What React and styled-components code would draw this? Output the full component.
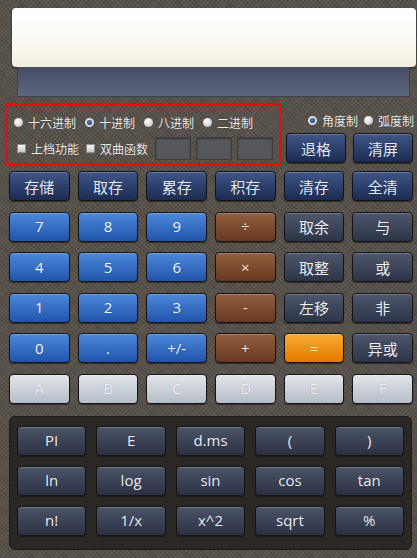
import React from 'react';
import styled, { createGlobalStyle, css } from 'styled-components';

const GlobalStyle = createGlobalStyle`
  html, body {
    margin: 0;
    padding: 0;
    background: #56504a;
  }
  body {
    font-family: "Open Sans", "Noto Sans CJK SC", sans-serif;
  }
`;

const Page = styled.div`
  width: 417px;
  height: 558px;
  overflow: hidden;
  padding-top: 8px;
  box-sizing: border-box;
  background-color: #58524b;
  background-image:
    repeating-linear-gradient(45deg, rgba(0, 0, 0, 0.14) 0 1px, transparent 1px 3px),
    repeating-linear-gradient(-45deg, rgba(255, 255, 255, 0.06) 0 1px, transparent 1px 3px);
  white-space: nowrap;
`;

const Display = styled.div`
  height: 59px;
  margin: 0 1px 0 12px;
  border-radius: 4px;
  background: linear-gradient(180deg, #ffffff 0%, #fbf9f1 60%, #f2eee0 100%);
  box-shadow: 0 1px 2px rgba(0, 0, 0, 0.7);
`;

const SubBar = styled.div`
  height: 30px;
  margin: 0 7px 0 17px;
  background: linear-gradient(180deg, #454d63 0%, #535c74 60%, #5e6780 100%);
  border: 1px solid #3a4050;
  border-top: none;
  box-sizing: border-box;
`;

const Controls = styled.div`
  display: flex;
  margin-top: 6px;
`;

const RedBox = styled.div`
  width: 277px;
  height: 63px;
  margin-left: 5px;
  box-sizing: border-box;
  border: 3px solid #e01010;
  padding: 7px 0 0 6px;
`;

const OptionRow = styled.div`
  display: flex;
  align-items: center;
  gap: ${p => p.$gap || 9}px;
  height: ${p => p.$h || 18}px;
`;

const Option = styled.label`
  display: flex;
  align-items: center;
  gap: 5px;
  font-family: "Noto Sans CJK SC", sans-serif;
  font-size: 12px;
  color: #ececec;
  text-shadow: 0 0 1px rgba(0, 0, 0, 0.5);
`;

const Radio = styled.span`
  width: 9px;
  height: 9px;
  border-radius: 50%;
  box-sizing: border-box;
  background: radial-gradient(circle at 40% 35%, #ffffff 0%, #d4d4d4 60%, #9a9a9a 100%);
  ${p => p.$on && css`
    border: 2px solid #d8dde4;
    background: radial-gradient(circle at 45% 40%, #5a8ac0 0%, #1d3f70 70%, #102040 100%);
  `}
`;

const Check = styled.span`
  width: 9px;
  height: 9px;
  box-sizing: border-box;
  border: 1px solid #8d8d8d;
  background: linear-gradient(180deg, #f4f4f4, #c8c8c8);
`;

const CheckRow = styled.div`
  display: flex;
  align-items: center;
  margin-top: 6px;
  padding-left: 3px;
`;

const Slot = styled.div`
  width: 36px;
  height: 23px;
  box-sizing: border-box;
  background: #57585c;
  border: 1px solid #3d3d40;
  box-shadow: inset 0 1px 2px rgba(0, 0, 0, 0.4);
`;

const Slots = styled.div`
  display: flex;
  gap: 5px;
  margin-left: 7px;
`;

const RightSide = styled.div`
  flex: 1;
  padding: 10px 0 0 4px;
`;

const RightButtons = styled.div`
  display: grid;
  grid-template-columns: 60px 60px;
  gap: 7px;
  margin-top: 6px;
  height: 30px;
`;

const palettes = {
  navy: { top: '#3f5688', bottom: '#1c2b52', text: '#e4ebf5' },
  blue: { top: '#4c89da', bottom: '#2154ab', text: '#f4f8ff' },
  brown: { top: '#93603f', bottom: '#673820', text: '#f3e8e0' },
  slate: { top: '#4e576d', bottom: '#2d3447', text: '#eef0f4' },
  orange: { top: '#fbac32', bottom: '#e27800', text: '#ffe8a0' },
  hex: { top: '#e2e6eb', bottom: '#b5bdc6', text: '#f2f4f6' },
  fn: { top: '#4c5468', bottom: '#2b3143', text: '#eceef2' },
};

const Key = styled.button`
  height: 30px;
  padding: 0;
  border-radius: 4px;
  border: 1px solid #121419;
  background: linear-gradient(180deg, ${p => palettes[p.$kind].top} 0%, ${p => palettes[p.$kind].bottom} 100%);
  color: ${p => palettes[p.$kind].text};
  box-shadow: inset 0 1px 0 rgba(255, 255, 255, 0.22), 0 1px 1px rgba(0, 0, 0, 0.45);
  text-shadow: 0 0 1px rgba(0, 0, 0, 0.35);
  font-family: "Open Sans", "Noto Sans CJK SC", sans-serif;
  font-size: 15px;
  line-height: 1;
  cursor: pointer;
  ${p => p.$cjk && css`font-family: "Noto Sans CJK SC", sans-serif;`}
`;

const Keypad = styled.div`
  display: grid;
  grid-template-columns: repeat(6, 1fr);
  grid-auto-rows: 30px;
  column-gap: 8px;
  row-gap: 10.5px;
  padding: 0 4px 0 9px;
  margin-top: 5px;
`;

const FnPanel = styled.div`
  margin: 12px 5px 0 9px;
  padding: 9px 7px 13px 7px;
  border-radius: 6px;
  background: #2a2724;
  border: 1px solid #1d1b19;
  display: grid;
  grid-template-columns: repeat(5, 1fr);
  grid-auto-rows: 30px;
  column-gap: 10px;
  row-gap: 10px;
`;

const radios = [
  { label: '十六进制' },
  { label: '十进制', on: true },
  { label: '八进制' },
  { label: '二进制' },
];

const keypad = [
  ['存储', 'navy', true], ['取存', 'navy', true], ['累存', 'navy', true], ['积存', 'navy', true], ['清存', 'navy', true], ['全清', 'navy', true],
  ['7', 'blue'], ['8', 'blue'], ['9', 'blue'], ['÷', 'brown'], ['取余', 'slate', true], ['与', 'slate', true],
  ['4', 'blue'], ['5', 'blue'], ['6', 'blue'], ['×', 'brown'], ['取整', 'slate', true], ['或', 'slate', true],
  ['1', 'blue'], ['2', 'blue'], ['3', 'blue'], ['-', 'brown'], ['左移', 'slate', true], ['非', 'slate', true],
  ['0', 'blue'], ['.', 'blue'], ['+/-', 'blue'], ['+', 'brown'], ['=', 'orange'], ['异或', 'slate', true],
  ['A', 'hex'], ['B', 'hex'], ['C', 'hex'], ['D', 'hex'], ['E', 'hex'], ['F', 'hex'],
];

const functions = ['PI', 'E', 'd.ms', '(', ')', 'ln', 'log', 'sin', 'cos', 'tan', 'n!', '1/x', 'x^2', 'sqrt', '%'];

export default function App() {
  return (
    <Page>
      <GlobalStyle />
      <Display />
      <SubBar />

      <Controls>
        <RedBox>
          <OptionRow>
            {radios.map(r => (
              <Option key={r.label}>
                <Radio $on={r.on} />
                {r.label}
              </Option>
            ))}
          </OptionRow>
          <CheckRow>
            <Option>
              <Check />
              上档功能
            </Option>
            <Option style={{ marginLeft: 7 }}>
              <Check />
              双曲函数
            </Option>
            <Slots>
              <Slot />
              <Slot />
              <Slot />
            </Slots>
          </CheckRow>
        </RedBox>

        <RightSide>
          <OptionRow $gap={6} $h={14} style={{ paddingLeft: 22 }}>
            <Option>
              <Radio $on />
              角度制
            </Option>
            <Option>
              <Radio />
              弧度制
            </Option>
          </OptionRow>
          <RightButtons>
            <Key $kind="navy" $cjk>退格</Key>
            <Key $kind="navy" $cjk>清屏</Key>
          </RightButtons>
        </RightSide>
      </Controls>

      <Keypad>
        {keypad.map(([label, kind, cjk]) => (
          <Key key={label} $kind={kind} $cjk={cjk}>{label}</Key>
        ))}
      </Keypad>

      <FnPanel>
        {functions.map(f => (
          <Key key={f} $kind="fn">{f}</Key>
        ))}
      </FnPanel>
    </Page>
  );
}
